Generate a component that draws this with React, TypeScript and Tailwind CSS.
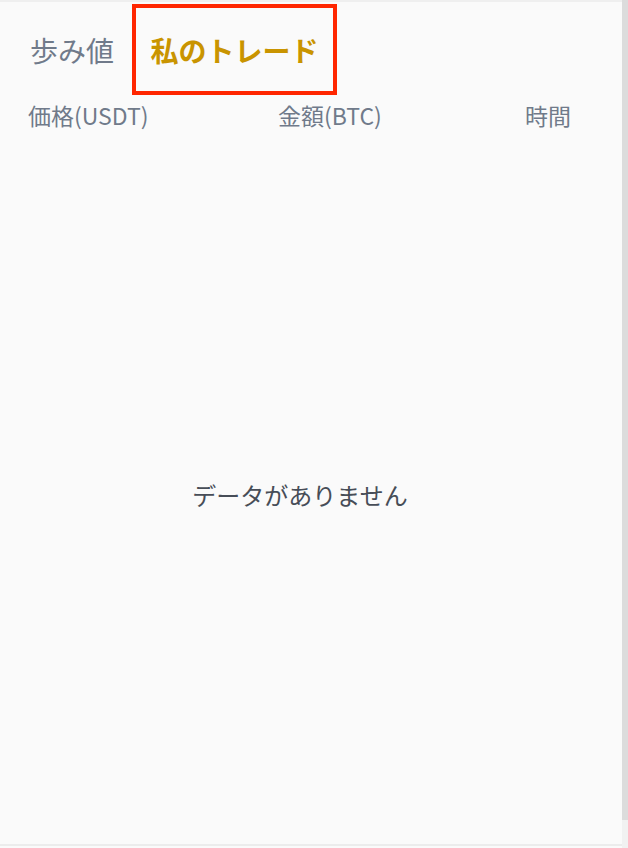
const FONT = '"Noto Sans CJK JP", "Noto Sans", sans-serif'

export default function App() {
  return (
    <div className="w-[628px] h-[848px] flex bg-[#fafafa] overflow-hidden" style={{ fontFamily: FONT }}>
      {/* Panel */}
      <div className="flex-1 flex flex-col border-t-2 border-[#efefef]">
        {/* Tabs */}
        <div className="flex items-center h-[91px] mt-[2px] pl-[30px] shrink-0">
          <button type="button" className="text-[28px] leading-none text-[#707a8a] mr-[18px]">
            歩み値
          </button>
          <button
            type="button"
            className="h-[91px] w-[205px] flex items-center justify-center border-4 border-[#ff2600] text-[28px] leading-none font-bold text-[#c99400]"
          >
            私のトレード
          </button>
        </div>

        {/* Column header */}
        <div className="grid grid-cols-[250px_1fr_auto] items-center h-[40px] pl-[28px] pr-[51px] text-[23px] text-[#707a8a] shrink-0">
          <span>価格(USDT)</span>
          <span>金額(BTC)</span>
          <span className="text-right">時間</span>
        </div>

        {/* Empty state */}
        <div className="flex-1 flex items-center justify-center pt-[10px] pr-[22px]">
          <p className="text-[24px] text-[#474d57]">データがありません</p>
        </div>

        <div className="h-[4px] border-t-2 border-[#ececec] shrink-0" />
      </div>

      {/* Scrollbar */}
      <div className="w-[6px] flex flex-col bg-[#f1f1f1]">
        <div className="h-[820px] bg-[#dcdcdc]" />
      </div>
    </div>
  )
}
